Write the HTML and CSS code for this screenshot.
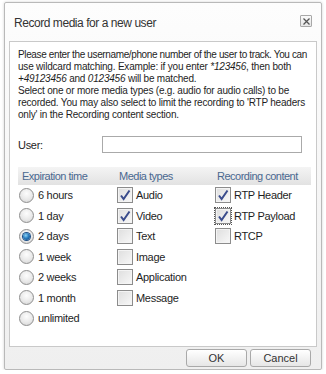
FILE: index.html
```html
<!DOCTYPE html>
<html>
<head>
<meta charset="utf-8">
<link rel="stylesheet" href="styles.css">
</head>
<body>
<div class="dialog">
  <div class="titlebar">
    <span class="title">Record media for a new user</span>
    <button class="close" aria-label="Close">
      <svg width="7" height="7" viewBox="0 0 7 7"><path d="M0.5 0.5 L6.5 6.5 M6.5 0.5 L0.5 6.5" stroke="#555" stroke-width="1.3" fill="none"/></svg>
    </button>
  </div>
  <div class="content">
    <p class="desc"><span class="tight">Please enter the username/phone number of the user to track. You can</span><br>use wildcard matching. Example: if you enter <i>*123456</i>, then both<br><i>+49123456</i> and <i>0123456</i> will be matched.<br>Select one or more media types (e.g. audio for audio calls) to be<br>recorded. You may also select to limit the recording to 'RTP headers<br>only' in the Recording content section.</p>
    <div class="user-row">
      <label class="user-label" for="user">User:</label>
      <input class="user-input" id="user" type="text">
    </div>
    <div class="options">
      <div class="head">
        <span>Expiration time</span>
        <span>Media types</span>
        <span>Recording content</span>
      </div>
      <div class="cols">
        <div class="col">
          <div class="item"><span class="radio"></span>6 hours</div>
          <div class="item"><span class="radio"></span>1 day</div>
          <div class="item"><span class="radio on"></span>2 days</div>
          <div class="item"><span class="radio"></span>1 week</div>
          <div class="item"><span class="radio"></span>2 weeks</div>
          <div class="item"><span class="radio"></span>1 month</div>
          <div class="item"><span class="radio"></span>unlimited</div>
        </div>
        <div class="col">
          <div class="item"><span class="check on"><svg width="12" height="12" viewBox="0 0 12 12"><path d="M2 6.5 L4.6 10 L10.5 1.5" stroke="#3a4c8c" stroke-width="2" fill="none"/></svg></span>Audio</div>
          <div class="item"><span class="check on"><svg width="12" height="12" viewBox="0 0 12 12"><path d="M2 6.5 L4.6 10 L10.5 1.5" stroke="#3a4c8c" stroke-width="2" fill="none"/></svg></span>Video</div>
          <div class="item"><span class="check"></span>Text</div>
          <div class="item"><span class="check"></span>Image</div>
          <div class="item"><span class="check"></span>Application</div>
          <div class="item"><span class="check"></span>Message</div>
        </div>
        <div class="col">
          <div class="item"><span class="check on"><svg width="12" height="12" viewBox="0 0 12 12"><path d="M2 6.5 L4.6 10 L10.5 1.5" stroke="#3a4c8c" stroke-width="2" fill="none"/></svg></span>RTP Header</div>
          <div class="item"><span class="check on focus"><svg width="12" height="12" viewBox="0 0 12 12"><path d="M2 6.5 L4.6 10 L10.5 1.5" stroke="#3a4c8c" stroke-width="2" fill="none"/></svg></span>RTP Payload</div>
          <div class="item"><span class="check"></span>RTCP</div>
        </div>
      </div>
    </div>
  </div>
  <div class="footer">
    <button class="btn">OK</button>
    <button class="btn">Cancel</button>
  </div>
</div>
</body>
</html>
```

FILE: styles.css
```css
html, body {
  margin: 0;
  padding: 0;
  background: #ffffff;
}
body {
  font-family: "Liberation Sans", Arial, sans-serif;
  font-size: 11px;
  letter-spacing: -0.3px;
  color: #1e1e1e;
}
.dialog {
  margin: 2px 4px 0 4px;
  width: 316px;
  height: 366px;
  border: 1px solid #b9b9b9;
  border-radius: 2px;
  background: linear-gradient(#fdfdfd, #efefef);
  box-shadow: 0 0 3px rgba(0,0,0,0.18);
  display: flex;
  flex-direction: column;
  overflow: hidden;
}
.titlebar {
  height: 38px;
  flex: none;
  display: flex;
  align-items: center;
  justify-content: space-between;
  padding: 0 9px 0 9px;
}
.title {
  font-size: 12px;
  letter-spacing: -0.45px;
  color: #333;
  margin-top: 2px;
}
.close {
  width: 12px;
  height: 12px;
  padding: 0;
  border: 1px solid #a8a8a8;
  border-radius: 1px;
  background: linear-gradient(#fafafa, #e6e6e6);
  display: flex;
  align-items: center;
  justify-content: center;
  margin-top: -2px;
}
.content {
  margin: 0 4px;
  height: 297px;
  flex: none;
  border: 1px solid #c9c9c9;
  background: #fff;
  padding: 7px 7px 0 8px;
  overflow: hidden;
}
.desc {
  margin: 0;
  font-size: 10px;
  line-height: 12px;
  white-space: nowrap;
  letter-spacing: -0.2px;
}
.desc .tight {
  letter-spacing: -0.37px;
}
.desc i {
  font-style: italic;
}
.user-row {
  display: flex;
  align-items: center;
  margin-top: 15px;
}
.user-label {
  width: 84px;
}
.user-input {
  width: 200px;
  height: 17px;
  box-sizing: border-box;
  border: 1px solid #aaa;
  background: #fff;
  padding: 0 3px;
  margin: 0;
}
.options {
  margin-top: 14px;
  width: 293px;
}
.head {
  display: grid;
  grid-template-columns: 97px 98px 1fr;
  height: 18px;
  align-items: center;
  background: linear-gradient(#f4f4f4, #e2e2e2);
  color: #4a6890;
  letter-spacing: -0.5px;
}
.head span {
  padding-left: 4px;
}
.cols {
  display: grid;
  grid-template-columns: 97px 98px 1fr;
}
.item {
  height: 20.5px;
  display: flex;
  align-items: center;
  padding-left: 2px;
}
.col:first-child .item {
  padding-left: 1px;
}
.radio {
  width: 13px;
  height: 13px;
  border: 1px solid #8e8e8e;
  border-radius: 50%;
  background: radial-gradient(circle at 50% 35%, #fdfdfd 0%, #e9e9e9 55%, #cfcfcf 100%);
  margin-right: 4px;
  display: flex;
  align-items: center;
  justify-content: center;
  flex: none;
}
.radio.on::after {
  content: "";
  width: 7px;
  height: 7px;
  border-radius: 50%;
  background: radial-gradient(circle at 40% 35%, #8fd4f4 0%, #2a7ec0 45%, #0b3e78 100%);
  box-shadow: 0 0 0 1px #1b4e86;
}
.check {
  width: 14px;
  height: 14px;
  border: 1px solid #8c8c8c;
  box-shadow: inset 0 0 0 1px #f4f4f4;
  background: linear-gradient(135deg, #dedede, #f8f8f8);
  margin-right: 3px;
  display: flex;
  align-items: center;
  justify-content: center;
  flex: none;
}
.check.focus {
  outline: 1px dotted #555;
  outline-offset: 0;
}
.footer {
  flex: 1;
  display: flex;
  justify-content: flex-end;
  align-items: center;
  gap: 3px;
  padding-right: 10px;
}
.btn {
  width: 61px;
  height: 18px;
  padding: 0;
  border: 1px solid #a9a9a9;
  border-radius: 3px;
  background: linear-gradient(#ffffff, #e6e6e6);
  font-family: "Liberation Sans", Arial, sans-serif;
  font-size: 11px;
  letter-spacing: 0;
  color: #333;
}
```
